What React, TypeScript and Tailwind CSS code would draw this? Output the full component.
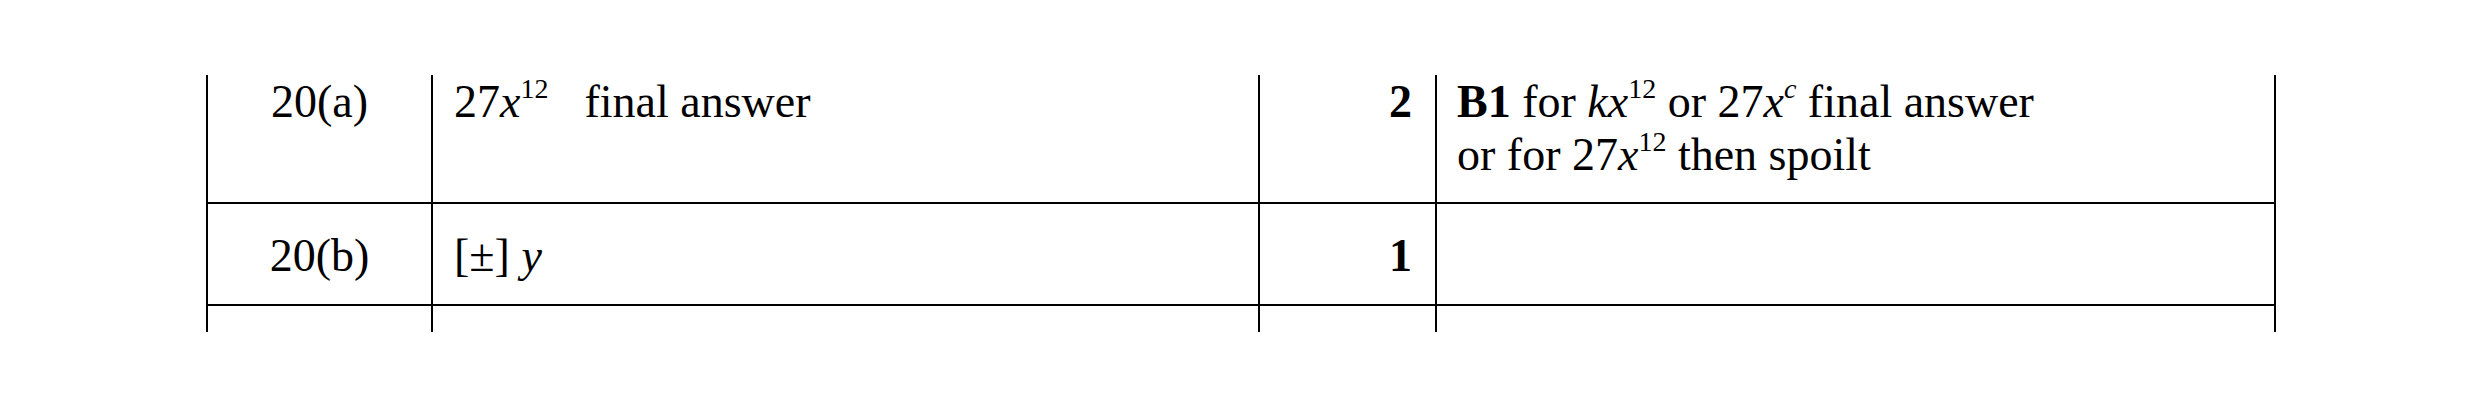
import React from "react";

function Sup({ children, italic }: { children: React.ReactNode; italic?: boolean }) {
  return (
    <span className={"relative -top-[19px] text-[28px] leading-none" + (italic ? " italic" : "")}>
      {children}
    </span>
  );
}

export default function App() {
  return (
    <div className="w-[2481px] h-[407px] bg-white text-black font-['Liberation_Serif',serif] text-[46px] leading-[53px] pt-[75px] pl-[206px]">
      <div className="w-[2070px]">
        {/* Row 1 */}
        <div className="flex h-[129px] border-b-2 border-black">
          <div className="w-[225px] border-l-2 border-black text-center">20(a)</div>
          <div className="w-[827px] border-l-2 border-black pl-[21px]">
            27<i>x</i>
            <Sup>12</Sup>
            <span className="ml-[36px]">final answer</span>
          </div>
          <div className="w-[177px] border-l-2 border-black pr-[23px] text-right font-bold">2</div>
          <div className="flex-1 border-l-2 border-r-2 border-black pl-[20px]">
            <div>
              <b>B1</b> for <i>kx</i>
              <Sup>12</Sup> or 27<i>x</i>
              <Sup italic>c</Sup> final answer
            </div>
            <div>
              or for 27<i>x</i>
              <Sup>12</Sup> then spoilt
            </div>
          </div>
        </div>
        {/* Row 2 */}
        <div className="flex h-[102px] border-b-2 border-black">
          <div className="w-[225px] border-l-2 border-black text-center pt-[25px]">20(b)</div>
          <div className="w-[827px] border-l-2 border-black pl-[21px] pt-[25px]">
            [±] <i>y</i>
          </div>
          <div className="w-[177px] border-l-2 border-black pr-[23px] text-right font-bold pt-[25px]">1</div>
          <div className="flex-1 border-l-2 border-r-2 border-black"></div>
        </div>
        {/* Row 3 */}
        <div className="flex h-[26px]">
          <div className="w-[225px] border-l-2 border-black"></div>
          <div className="w-[827px] border-l-2 border-black"></div>
          <div className="w-[177px] border-l-2 border-black"></div>
          <div className="flex-1 border-l-2 border-r-2 border-black"></div>
        </div>
      </div>
    </div>
  );
}
